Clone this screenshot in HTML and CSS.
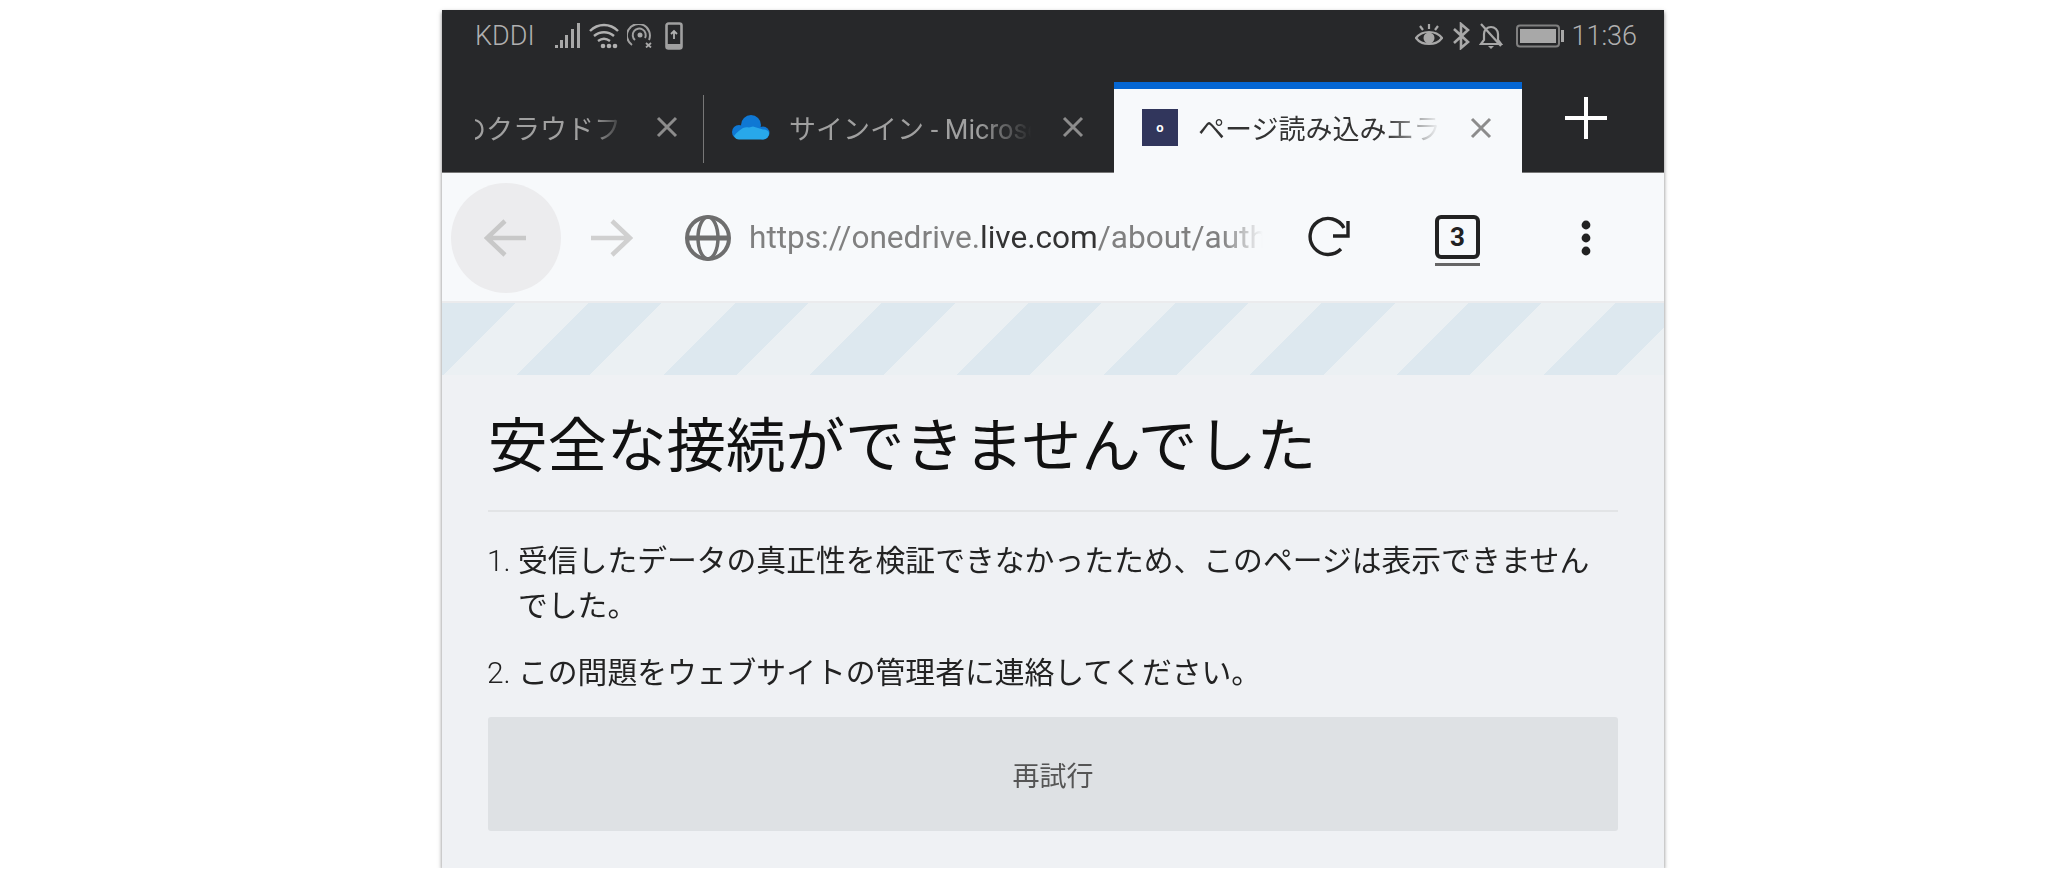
FILE: index.html
```html
<!DOCTYPE html>
<html lang="ja">
<head>
  <meta charset="UTF-8" />
  <title>ページ読み込みエラー</title>
  <link rel="stylesheet" href="styles.css">
</head>
<body>
  <div class="screen">
    <!-- Status bar -->
    <div class="status-bar">
      <div class="status-left">
        <span class="carrier">KDDI</span>
        <svg class="ic-signal" viewBox="0 0 26 26"><g fill="#a8a8a8"><rect x="0" y="22" width="3" height="3"/><rect x="5" y="17" width="3" height="8"/><rect x="10" y="12" width="3" height="13"/><rect x="16" y="6" width="3" height="19"/><rect x="22" y="0" width="3" height="25"/></g></svg>
        <svg class="ic-wifi" viewBox="0 0 30 26"><g fill="none" stroke="#b0b0b0" stroke-width="2.400"><path d="M1 8c8-8 20-8 28 0"/><path d="M5 13c6-5 14-5 20 0"/><path d="M9 18c4-3 8-3 12 0"/></g><g fill="#b0b0b0"><circle cx="14" cy="23" r="2.300"/><circle cx="20" cy="23" r="2.300"/><circle cx="26" cy="23" r="2.300"/></g></svg>
        <svg class="ic-hotspot" viewBox="0 0 26 24"><g fill="none" stroke="#a0a0a0" stroke-width="2"><path d="M5 21a11.500 11.500 0 1 1 17-5"/><path d="M8 16a6.500 6.500 0 1 1 10-2"/></g><circle cx="13" cy="11" r="2.500" fill="#a8a8a8"/><path d="M19 19l5 4.500m0-4.500l-5 4.500" stroke="#a8a8a8" stroke-width="1.800"/></svg>
        <svg class="ic-phone" viewBox="0 0 18 28"><path d="M1.500 3.500a2 2 0 0 1 2-2h11a2 2 0 0 1 2 2v21a2 2 0 0 1-2 2h-11a2 2 0 0 1-2-2z" fill="none" stroke="#a0a0a0" stroke-width="2.600"/><rect x="2" y="22" width="14" height="4" fill="#a0a0a0"/><path d="M9 17v-8m-3 3l3-3 3 3" fill="none" stroke="#b0b0b0" stroke-width="1.800"/></svg>
      </div>
      <div class="status-right">
        <svg class="ic-eye" viewBox="0 0 28 24"><g fill="none" stroke="#a8a8a8" stroke-width="2.200"><path d="M1 14c6-8 20-8 26 0c-6 8-20 8-26 0z"/><path d="M14 0v5M5 2l3 4m15-4l-3 4"/></g><circle cx="14" cy="14" r="5.500" fill="#a8a8a8"/></svg>
        <svg class="ic-bt" viewBox="0 0 18 28"><path d="M2 7l14 13-7 6V2l7 6L2 21" fill="none" stroke="#a8a8a8" stroke-width="2.600"/></svg>
        <svg class="ic-bell" viewBox="0 0 24 26"><g fill="none" stroke="#a8a8a8" stroke-width="2.200"><path d="M2 21h20l-3-4V11a7 7 0 0 0-14 0v6z"/><path d="M2 1l20 22"/></g><path d="M9 23h6l-3 3z" fill="#a8a8a8"/></svg>
        <svg class="ic-batt" viewBox="0 0 48 24"><rect x="1" y="1.500" width="42" height="21" rx="3" fill="none" stroke="#808080" stroke-width="2"/><rect x="4" y="5" width="36" height="14" fill="#a8a8a8"/><rect x="45" y="6" width="3" height="12" fill="#a8a8a8"/></svg>
        <span class="clock">11:36</span>
      </div>
    </div>

    <!-- Tabs -->
    <div class="tab-strip">
      <div class="tab tab-first">
        <div class="tab-title tab-title-clip"><span>のクラウドファ</span></div>
        <svg class="tab-close" viewBox="0 0 22 22"><path d="M2 2l18 18M20 2L2 20"/></svg>
      </div>
      <div class="tab tab-second">
        <svg class="favicon-cloud" viewBox="0 0 38 25"><g fill="#0f78d4"><circle cx="19" cy="10" r="10"/><circle cx="7" cy="17" r="7"/><circle cx="31" cy="18" r="6.500"/><rect x="7" y="12" width="24" height="12"/></g><path d="M2 21c3-4 6-6 9-8 2-1 4-1 6-.5l4-1 10 3c4 0 6 2 6 4 0 3-3 6-6 6H7c-2 0-4-1-5-3.500z" fill="#28a8ea"/></svg>
        <div class="tab-title"><span>サインイン - Microsoft</span></div>
        <svg class="tab-close" viewBox="0 0 22 22"><path d="M2 2l18 18M20 2L2 20"/></svg>
      </div>
      <div class="tab tab-active">
        <div class="favicon-box">o</div>
        <div class="tab-title"><span>ページ読み込みエラー</span></div>
        <svg class="tab-close" viewBox="0 0 22 22"><path d="M2 2l18 18M20 2L2 20"/></svg>
      </div>
      <div class="tab-new">
        <svg viewBox="0 0 42 42"><path d="M21 0v42M0 21h42" stroke="#fff" stroke-width="4"/></svg>
      </div>
    </div>

    <!-- Toolbar -->
    <div class="toolbar">
      <div class="back-btn">
        <svg viewBox="0 0 44 40"><path d="M42 20H4M21 3L3 20l18 17" fill="none" stroke="#c8c8c8" stroke-width="4.500"/></svg>
      </div>
      <div class="forward-btn">
        <svg viewBox="0 0 44 40"><path d="M2 20h38M23 3l18 17-18 17" fill="none" stroke="#d0d0d0" stroke-width="4.500"/></svg>
      </div>
      <svg class="ic-globe" viewBox="0 0 46 46"><g fill="none" stroke="#6e6e6e"><circle cx="23" cy="23" r="21" stroke-width="4"/><ellipse cx="23" cy="23" rx="10" ry="21" stroke-width="3.500"/><path d="M3 23h40" stroke-width="5"/></g></svg>
      <div class="url"><span class="url-text">https://onedrive.<b>live.com</b>/about/authorize</span></div>
      <svg class="ic-reload" viewBox="0 0 44 44"><g fill="none" stroke="#222" stroke-width="3.400"><path d="M33 33A18 18 0 1 1 36 12"/><path d="M40 5v15H25"/></g></svg>
      <div class="tab-count">
        <div class="tab-count-box">3</div>
        <div class="tab-count-line"></div>
      </div>
      <svg class="ic-menu" viewBox="0 0 12 36"><g fill="#222"><circle cx="6" cy="5" r="4.400"/><circle cx="6" cy="18" r="4.400"/><circle cx="6" cy="31" r="4.400"/></g></svg>
    </div>

    <div class="stripes"></div>

    <!-- Error page -->
    <div class="content">
      <h1>安全な接続ができませんでした</h1>
      <ol>
        <li>受信したデータの真正性を検証できなかったため、このページは表示できませんでした。</li>
        <li>この問題をウェブサイトの管理者に連絡してください。</li>
      </ol>
      <div class="retry">再試行</div>
    </div>
  </div>
</body>
</html>
```

FILE: styles.css
```css
* {
  box-sizing: border-box;
}

body {
  margin: 0;
  padding: 10px 0 0 442px;
  background-color: white;
  font-family: 'Roboto', 'Noto Sans CJK JP', sans-serif;
}

.screen {
  width: 1222px;
  height: 858px;
  background-color: #eff1f4;
  box-shadow: 0 2px 4px rgba(0, 0, 0, 0.5);
  display: flex;
  flex-direction: column;
  filter: blur(0.6px);
}

/* status bar */
.status-bar {
  height: 72px;
  flex-shrink: 0;
  background-color: #27282a;
  padding: 13px 27px 0 33px;
  display: flex;
  justify-content: space-between;
  align-items: flex-start;
  color: #b0b0b0;
  font-size: 27px;
  font-weight: 300;
}

.status-left,
.status-right {
  display: flex;
  align-items: center;
  height: 26px;
}

.carrier {
  margin-right: 20px;
}

.ic-signal { width: 26px; height: 26px; margin-right: 8px; }
.ic-wifi { width: 30px; height: 26px; margin-right: 8px; }
.ic-hotspot { width: 26px; height: 24px; margin-right: 12px; }
.ic-phone { width: 18px; height: 28px; }

.ic-eye { width: 28px; height: 24px; margin-right: 9px; }
.ic-bt { width: 18px; height: 28px; margin-right: 9px; }
.ic-bell { width: 24px; height: 26px; margin-right: 13px; }
.ic-batt { width: 48px; height: 24px; margin-right: 7px; }

/* tabs */
.tab-strip {
  height: 91px;
  flex-shrink: 0;
  background-color: #27282a;
  border-bottom: 1px solid #777;
  display: flex;
  font-size: 27px;
}

.tab {
  display: flex;
  align-items: center;
  color: #a0a0a0;
}

.tab-first {
  width: 262px;
  padding: 0 26px 0 33px;
  position: relative;
}

.tab-first::after {
  content: "";
  position: absolute;
  right: 0;
  top: 13px;
  height: 68px;
  width: 1px;
  background-color: #777;
}

.tab-second {
  width: 410px;
  padding: 0 30px 0 28px;
}

.tab-active {
  width: 408px;
  height: 91px;
  padding: 0 30px 7px 28px;
  background-color: #f7f9fb;
  border-top: 7px solid #0566d2;
  color: #333;
}

.tab-title {
  flex: 1;
  min-width: 0;
  display: flex;
  overflow: hidden;
  white-space: nowrap;
  margin-right: 30px;
  -webkit-mask-image: linear-gradient(to right, #000 78%, transparent 100%);
  mask-image: linear-gradient(to right, #000 78%, transparent 100%);
}

.tab-title span {
  flex-shrink: 0;
}

/* scrolled tab: the start of its title is cut by the strip */
.tab-title-clip span {
  margin-left: -16px;
}

.tab-close {
  width: 22px;
  height: 22px;
  flex-shrink: 0;
  fill: none;
  stroke: #8c8c8c;
  stroke-width: 3;
}

.favicon-cloud {
  width: 38px;
  height: 25px;
  flex-shrink: 0;
  margin-right: 19px;
}

.favicon-box {
  width: 36px;
  height: 37px;
  flex-shrink: 0;
  margin-right: 20px;
  background-color: #31365c;
  color: #fff;
  font-size: 13px;
  font-weight: 700;
  display: flex;
  align-items: center;
  justify-content: center;
}

.tab-new {
  flex: 1;
  display: flex;
  align-items: center;
  justify-content: center;
  padding: 0 16px 18px 2px;
}

.tab-new svg {
  width: 42px;
  height: 42px;
}

/* toolbar */
.toolbar {
  height: 130px;
  flex-shrink: 0;
  background-color: #f7f9fb;
  border-bottom: 2px solid #ebebed;
  display: flex;
  align-items: center;
  padding: 1px 0 0 9px;
}

.back-btn {
  width: 110px;
  height: 110px;
  flex-shrink: 0;
  border-radius: 50%;
  background-color: #ececee;
  display: flex;
  align-items: center;
  justify-content: center;
}

.back-btn svg,
.forward-btn svg {
  width: 44px;
  height: 40px;
}

.forward-btn {
  display: flex;
  margin-left: 28px;
}

.ic-globe {
  width: 46px;
  height: 46px;
  flex-shrink: 0;
  margin-left: 52px;
}

.url {
  width: 514px;
  margin-left: 18px;
  overflow: hidden;
  white-space: nowrap;
  font-size: 31.6px;
  color: #808080;
  -webkit-mask-image: linear-gradient(to right, #000 92%, transparent 100%);
  mask-image: linear-gradient(to right, #000 92%, transparent 100%);
}

.url b {
  font-weight: 400;
  color: #333;
}

.ic-reload {
  width: 44px;
  height: 44px;
  flex-shrink: 0;
  margin-left: 45px;
}

.tab-count {
  width: 45px;
  margin-left: 83px;
  margin-top: 6px;
  flex-shrink: 0;
}

.tab-count-box {
  height: 44px;
  border: 4px solid #222;
  border-radius: 6px;
  font-size: 26px;
  font-weight: 700;
  color: #222;
  display: flex;
  align-items: center;
  justify-content: center;
}

.tab-count-line {
  height: 3px;
  margin-top: 4px;
  background-color: #666;
}

.ic-menu {
  width: 12px;
  height: 36px;
  flex-shrink: 0;
  margin-left: 100px;
}

.stripes {
  height: 72px;
  flex-shrink: 0;
  background-image: repeating-linear-gradient(
    135deg,
    #dde8ef 0,
    #dde8ef 51.85px,
    #ebf0f3 51.85px,
    #ebf0f3 103.7px
  );
}

/* error content */
.content {
  flex: 1;
  padding: 0 46px;
}

h1 {
  margin: 0;
  padding-top: 32px;
  height: 137px;
  border-bottom: 2px solid #e2e4e6;
  font-size: 59.5px;
  line-height: 80px;
  font-weight: 400;
  color: #111;
}

ol {
  margin: 26px 0 0;
  padding: 0 26px 0 30px;
  font-size: 29.8px;
  line-height: 45px;
  color: #222;
  font-weight: 400;
}

li {
  margin-bottom: 22px;
}

li::marker {
  font-weight: 300;
}

.retry {
  height: 114px;
  margin-top: 22px;
  background-color: #dee1e4;
  border-radius: 3px;
  font-size: 27px;
  color: #555;
  display: flex;
  align-items: center;
  justify-content: center;
}
```
